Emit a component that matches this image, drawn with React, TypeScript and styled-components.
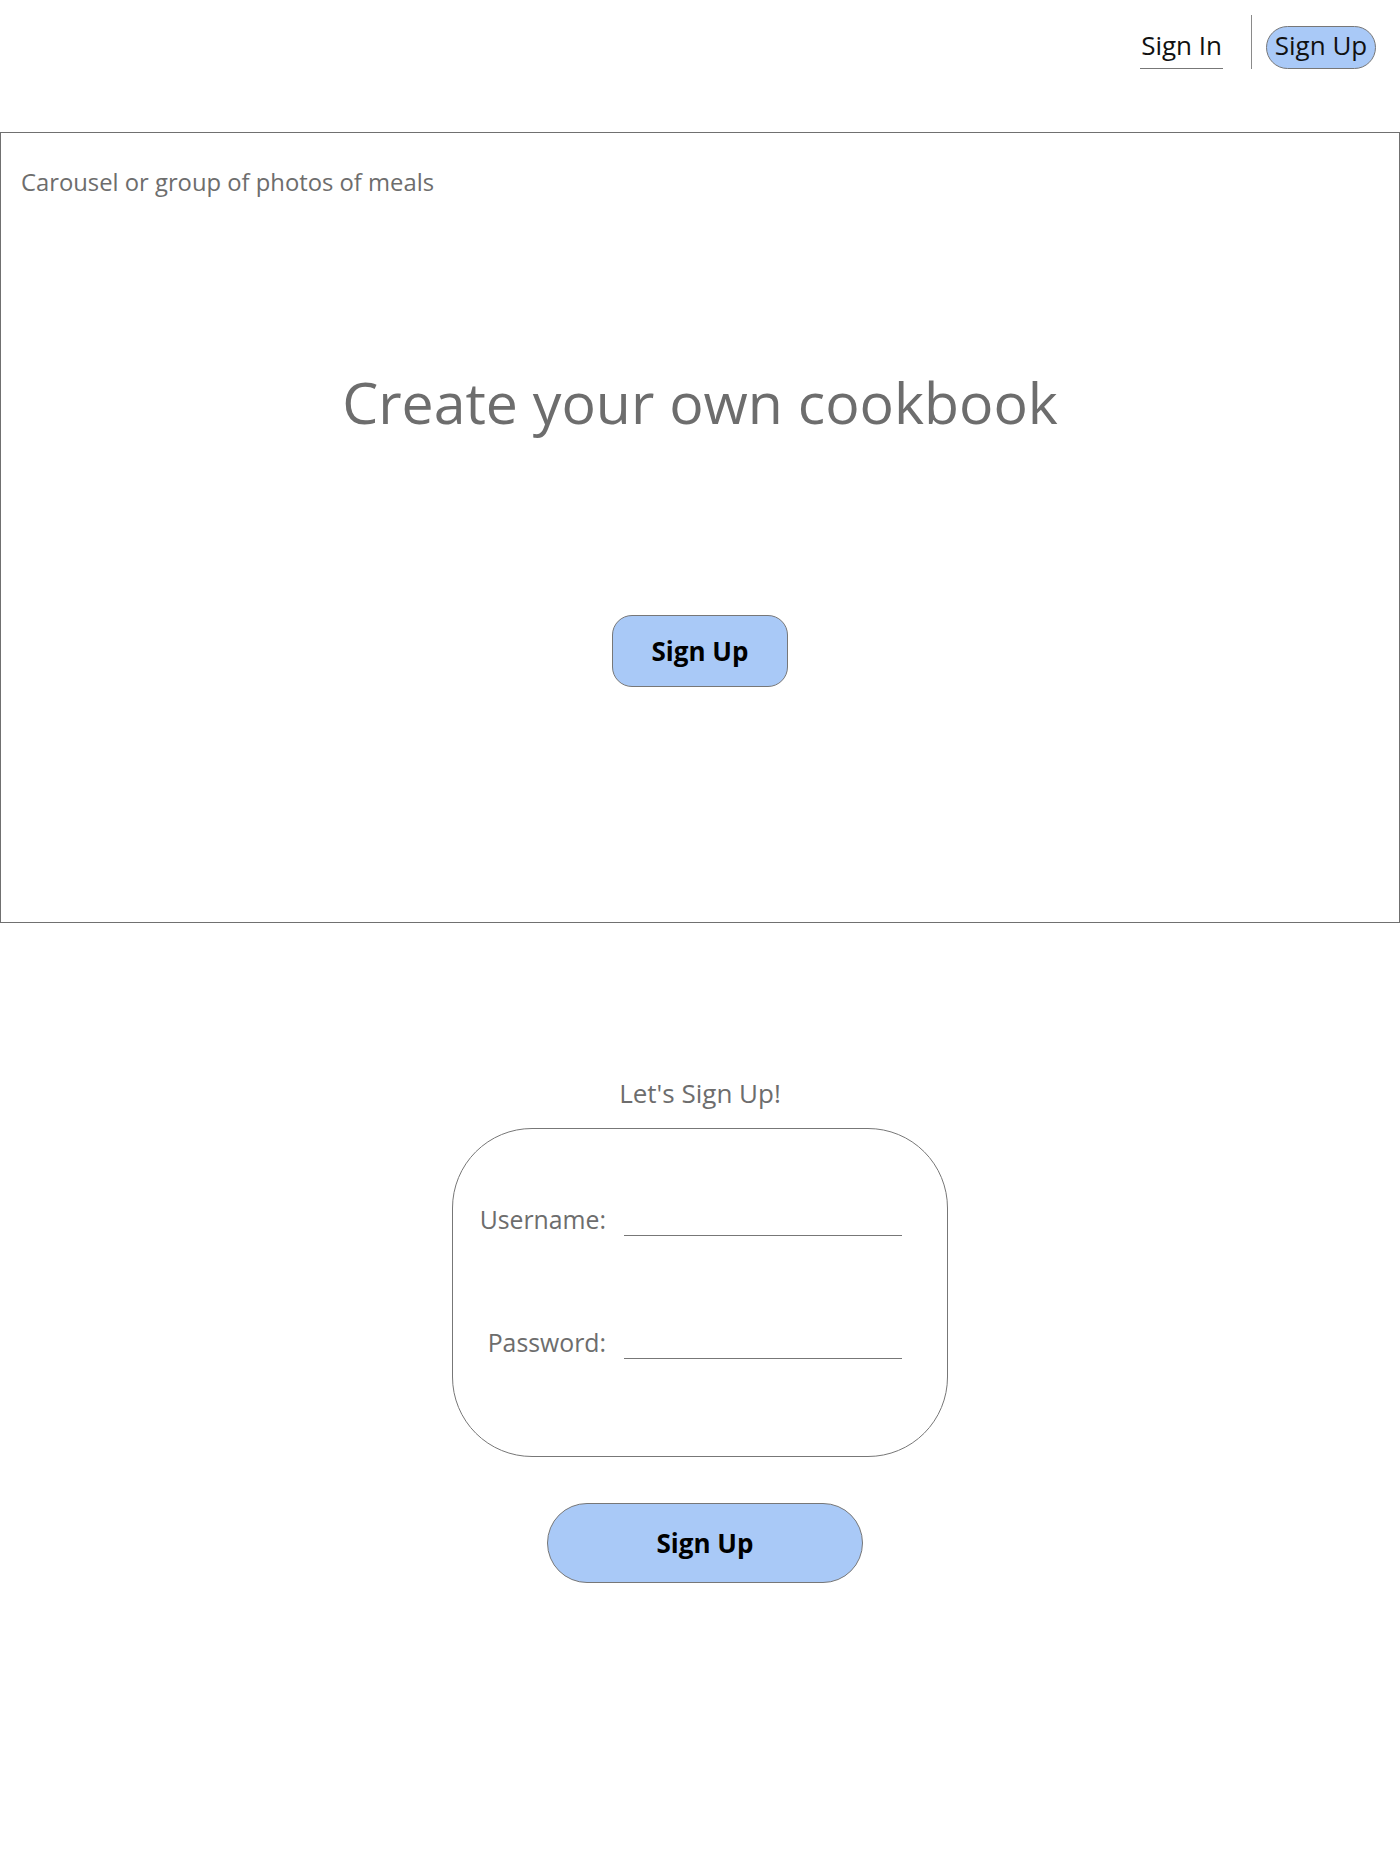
import React from "react";
import styled, { createGlobalStyle } from "styled-components";

const GlobalStyle = createGlobalStyle`
    body {
        margin: 0;
        background: #ffffff;
        font-family: "Open Sans", "Noto Sans", sans-serif;
    }
`;

const Page = styled.div`
    width: 1400px;
    min-height: 1870px;
    display: flex;
    flex-direction: column;
`;

const Header = styled.header`
    height: 69px;
    margin-bottom: 63px;
    display: flex;
    justify-content: flex-end;
    align-items: flex-end;
    padding-right: 24px;
`;

const NavLink = styled.a`
    font-size: 26px;
    line-height: 34px;
    color: #111111;
    padding: 0 1px 6px;
    border-bottom: 1px solid #777777;
    cursor: pointer;
`;

const Divider = styled.div`
    width: 1px;
    height: 54px;
    background: #8a8a8a;
    margin: 0 14px 0 28px;
`;

const PillButton = styled.button`
    height: 43px;
    width: 110px;
    border-radius: 22px;
    border: 1px solid #777777;
    background: #a9c9f7;
    font-family: inherit;
    font-size: 26px;
    line-height: 1;
    color: #111111;
    padding: 0 0 5px;
    cursor: pointer;
`;

const Hero = styled.section`
    box-sizing: border-box;
    height: 791px;
    border: 1px solid #707070;
    display: flex;
    flex-direction: column;
    align-items: center;
    padding: 33px 20px 0;
`;

const Caption = styled.div`
    align-self: flex-start;
    font-size: 23.8px;
    line-height: 32px;
    color: #6d6d6d;
`;

const Headline = styled.h1`
    margin: 169px 0 0;
    font-size: 57.2px;
    line-height: 70px;
    font-weight: 400;
    color: #6d6d6d;
`;

const PrimaryButton = styled.button<{ $width: number; $height: number; $radius: number }>`
    width: ${p => p.$width}px;
    height: ${p => p.$height}px;
    border-radius: ${p => p.$radius}px;
    border: 1px solid #777777;
    background: #a9c9f7;
    font-family: inherit;
    font-size: 26px;
    font-weight: 700;
    color: #000000;
    cursor: pointer;
`;

const HeroButton = styled(PrimaryButton)`
    margin-top: 178px;
`;

const FormSection = styled.section`
    display: flex;
    flex-direction: column;
    align-items: center;
    padding-top: 153px;
`;

const FormTitle = styled.div`
    font-size: 26px;
    line-height: 34px;
    color: #6d6d6d;
`;

const Card = styled.form`
    box-sizing: border-box;
    width: 496px;
    height: 329px;
    margin-top: 18px;
    border: 1px solid #777777;
    border-radius: 80px;
    padding: 71px 0 0 23px;
    display: grid;
    grid-template-columns: 130px 278px;
    grid-auto-rows: 36px;
    column-gap: 18px;
    row-gap: 87px;
    align-items: end;
`;

const Label = styled.label`
    justify-self: end;
    font-size: 24.8px;
    line-height: 34px;
    color: #6d6d6d;
`;

const LineInput = styled.input`
    box-sizing: border-box;
    width: 100%;
    height: 36px;
    border: none;
    border-bottom: 1px solid #777777;
    outline: none;
    background: transparent;
    font-family: inherit;
    font-size: 22px;
    color: #333333;
    padding: 0 4px;
`;

const SubmitButton = styled(PrimaryButton)`
    margin: 46px 0 0 10px;
`;

export default function App(): JSX.Element {
    return <Page>
        <GlobalStyle />
        <Header>
            <NavLink>Sign In</NavLink>
            <Divider />
            <PillButton>Sign Up</PillButton>
        </Header>
        <Hero>
            <Caption>Carousel or group of photos of meals</Caption>
            <Headline>Create your own cookbook</Headline>
            <HeroButton $width={176} $height={72} $radius={20}>Sign Up</HeroButton>
        </Hero>
        <FormSection>
            <FormTitle>Let's Sign Up!</FormTitle>
            <Card onSubmit={e => e.preventDefault()}>
                <Label htmlFor="username">Username:</Label>
                <LineInput id="username" type="text" />
                <Label htmlFor="password">Password:</Label>
                <LineInput id="password" type="password" />
            </Card>
            <SubmitButton $width={316} $height={80} $radius={40}>Sign Up</SubmitButton>
        </FormSection>
    </Page>;
}
